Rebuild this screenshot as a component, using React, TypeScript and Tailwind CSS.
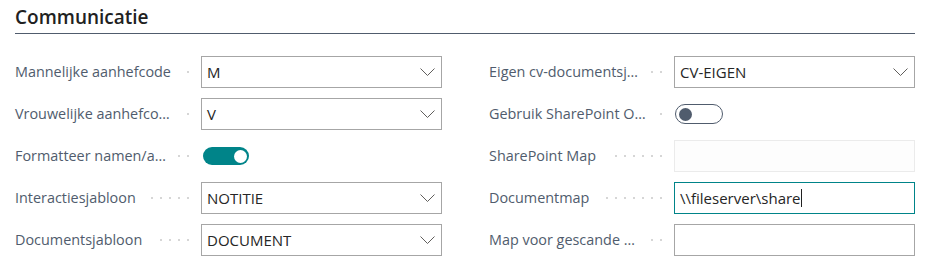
import React from "react";

const FONT = { fontFamily: '"Segoe UI", "Open Sans", "Noto Sans", sans-serif' };

function Dots() {
  const arr = Array.from({ length: 23 });
  return (
    <div className="flex-1 min-w-0 h-full pr-[12px] flex items-center gap-[7px]">
      <div className="flex-1 min-w-0 overflow-hidden flex justify-end items-center gap-[7px] [clip-path:inset(0_0_0_12px)]">
        {arr.map((_, i) => (
          <span key={i} className="shrink-0 w-[2px] h-[2px] rounded-full bg-[#c8c8c8]" />
        ))}
      </div>
      <span className="shrink-0 w-[2px] h-[2px] rounded-full bg-[#c8c8c8]" />
    </div>
  );
}

function Label({ text, width }: { text: string; width: string }) {
  return (
    <div className={`flex items-center h-full shrink-0 ${width}`}>
      <span className="shrink-0 whitespace-nowrap text-[14.4px] text-[#505c6d]">{text}</span>
      <Dots />
    </div>
  );
}

function Chevron() {
  return (
    <svg width="15" height="8" viewBox="0 0 15 8" className="shrink-0">
      <polyline points="0.5,0.5 7.5,7.5 14.5,0.5" fill="none" stroke="#605e5c" strokeWidth="1" />
    </svg>
  );
}

function Select({ value }: { value: string }) {
  return (
    <div className="shrink-0 w-[241px] h-8 border border-[#a6a6a6] bg-white flex items-center justify-between pl-[5px] pr-[6px]">
      <span className="text-[15px] text-[#262626]">{value}</span>
      <Chevron />
    </div>
  );
}

function Input({ value, variant, caret }: { value?: string; variant: "normal" | "disabled" | "focus"; caret?: boolean }) {
  const cls =
    variant === "disabled"
      ? "border-[#ebebeb] bg-[#fdfdfd]"
      : variant === "focus"
      ? "border-[#008489] bg-white"
      : "border-[#a6a6a6] bg-white";
  return (
    <div className={`shrink-0 w-[241px] h-8 border ${cls} flex items-center pl-[5px]`}>
      <span className="text-[15px] text-[#262626] whitespace-nowrap">{value}</span>
      {caret && <span className="w-px h-[18px] bg-[#212121]" />}
    </div>
  );
}

function ToggleOn() {
  return (
    <div className="ml-[2px] w-[46px] h-[18px] rounded-full bg-[#008489] flex items-center justify-end pr-[2px]">
      <span className="w-[13px] h-[13px] rounded-full bg-white" />
    </div>
  );
}

function ToggleOff() {
  return (
    <div className="ml-[1px] w-[48px] h-[20px] rounded-full border border-[#505c6d] bg-white flex items-center pl-[3px]">
      <span className="w-[13px] h-[13px] rounded-full bg-[#505c6d]" />
    </div>
  );
}

function Row({ label, children, lw }: { label: string; children: React.ReactNode; lw: string }) {
  return (
    <div className="flex items-center h-8">
      <Label text={label} width={lw} />
      {children}
    </div>
  );
}

export default function App() {
  return (
    <div className="w-[925px] h-[266px] bg-white pl-[15px] pr-[10px] overflow-hidden" style={FONT}>
      <div className="border-b border-[#505c6d] h-[34px] flex items-end pb-[3px]">
        <h2 className="text-[19px] font-semibold text-[#212121] leading-[26px]">Communicatie</h2>
      </div>
      <div className="mt-[22px] grid grid-cols-[427px_426px] gap-x-[47px]">
        <div className="flex flex-col gap-[10px]">
          <Row label="Mannelijke aanhefcode" lw="w-[186px]">
            <Select value="M" />
          </Row>
          <Row label="Vrouwelijke aanhefco…" lw="w-[186px]">
            <Select value="V" />
          </Row>
          <Row label="Formatteer namen/a…" lw="w-[186px]">
            <ToggleOn />
          </Row>
          <Row label="Interactiesjabloon" lw="w-[186px]">
            <Select value="NOTITIE" />
          </Row>
          <Row label="Documentsjabloon" lw="w-[186px]">
            <Select value="DOCUMENT" />
          </Row>
        </div>
        <div className="flex flex-col gap-[10px]">
          <Row label="Eigen cv-documentsj…" lw="w-[185px]">
            <Select value="CV-EIGEN" />
          </Row>
          <Row label="Gebruik SharePoint O…" lw="w-[185px]">
            <ToggleOff />
          </Row>
          <Row label="SharePoint Map" lw="w-[185px]">
            <Input variant="disabled" />
          </Row>
          <Row label="Documentmap" lw="w-[185px]">
            <Input variant="focus" value="\\fileserver\share" caret />
          </Row>
          <Row label="Map voor gescande …" lw="w-[185px]">
            <Input variant="normal" />
          </Row>
        </div>
      </div>
    </div>
  );
}
